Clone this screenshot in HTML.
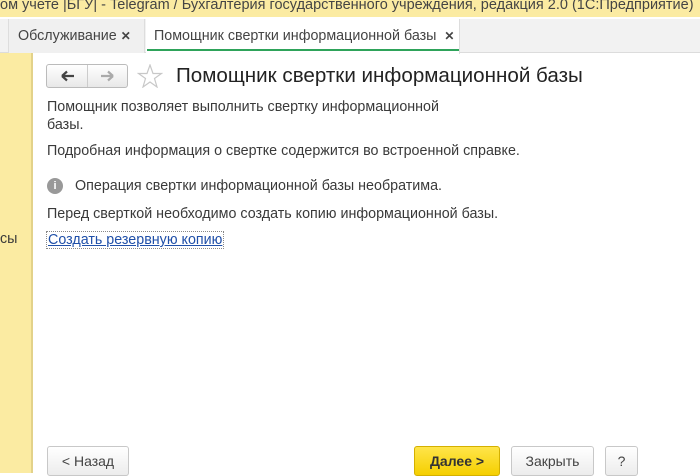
<!DOCTYPE html>
<html><head><meta charset="utf-8"><style>
body{margin:0;width:700px;height:473px;overflow:hidden;background:#fff;font-family:"Liberation Sans",sans-serif;position:relative;color:#333}
div{position:absolute;box-sizing:border-box}
.t{font-size:14.3px;white-space:nowrap;color:#3a3a3a}
.btn{border:1px solid #c8c8c8;border-radius:3px;background:linear-gradient(#fff,#ececec);font-size:14px;text-align:center;line-height:28px;color:#444}
</style></head><body>
<div style="left:0;top:0;width:700px;height:19px;background:#fbeba2;font-size:14.5px;line-height:15px;color:#444;white-space:nowrap;overflow:hidden;margin-top:-2px">ом учете |БГУ| - Telegram / Бухгалтерия государственного учреждения, редакция 2.0 (1С:Предприятие)</div>
<div style="left:0;top:19px;width:700px;height:34px;background:#f2f2f2;border-bottom:1px solid #dcdcdc"></div>
<div style="left:8px;top:19px;width:137px;height:34px;border-left:1px solid #ddd;border-right:1px solid #ddd;background:#f0f0f0;font-size:14.3px;line-height:34px;padding-left:9px;color:#444;white-space:nowrap">Обслуживание <b style="font-size:12px">✕</b></div>
<div style="left:146px;top:19px;width:314px;height:35px;background:#fff;border-right:1px solid #ddd;font-size:14.3px;line-height:34px;padding-left:8px;color:#444;white-space:nowrap">Помощник свертки информационной базы&nbsp;&nbsp;<b style="font-size:12px">✕</b></div>
<div style="left:147px;top:49px;height:2px;background:#2ea35a;width:312px"></div>
<div style="left:0;top:53px;width:33px;height:420px;background:#fbeba2;border-right:2px solid #e3d28a"></div>
<div class="t" style="left:0;top:231px">сы</div>
<div style="left:46px;top:64px;width:82px;height:24px;border:1px solid #bbb;border-radius:3px;background:linear-gradient(#fff,#e8e8e8)"></div>
<div style="left:87px;top:65px;width:1px;height:22px;background:#ccc"></div>
<svg style="position:absolute;left:59px;top:69px" width="18" height="14"><path d="M3 7H15M3 7L8 2.5M3 7L8 11.5" stroke="#444" stroke-width="2.2" fill="none"/></svg>
<svg style="position:absolute;left:98px;top:69px" width="18" height="14"><path d="M3 7H15M15 7L10 2.5M15 7L10 11.5" stroke="#aaa" stroke-width="2.2" fill="none"/></svg>
<svg style="position:absolute;left:137px;top:64px" width="26" height="24"><path d="M13 1L16 9.5H24.5L17.5 14.5L20 23L13 18L6 23L8.5 14.5L1.5 9.5H10Z" fill="none" stroke="#c8c8c8" stroke-width="1.2"/></svg>
<div style="left:176px;top:63px;font-size:20.6px;line-height:26px;color:#222;white-space:nowrap">Помощник свертки информационной базы</div>
<div class="t" style="left:47px;top:98px;line-height:18px">Помощник позволяет выполнить свертку информационной<br>базы.</div>
<div class="t" style="left:47px;top:143px">Подробная информация о свертке содержится во встроенной справке.</div>
<div style="left:47px;top:178px;width:16px;height:16px;border-radius:50%;background:#999;color:#fff;font-size:11px;line-height:16px;text-align:center;font-weight:bold">i</div>
<div class="t" style="left:75px;top:178px">Операция свертки информационной базы необратима.</div>
<div class="t" style="left:47px;top:206px">Перед сверткой необходимо создать копию информационной базы.</div>
<div class="t" style="left:46px;top:231px;color:#1f4fa8;text-decoration:underline;border:1px dotted #888;padding:0 1px">Создать резервную копию</div>
<div class="btn" style="left:47px;top:446px;width:82px;height:30px">&lt; Назад</div>
<div class="btn" style="left:414px;top:446px;width:86px;height:30px;background:linear-gradient(#ffe54a,#f5cf00);border-color:#d4b000;font-weight:bold;color:#333">Далее &gt;</div>
<div class="btn" style="left:511px;top:446px;width:83px;height:30px">Закрыть</div>
<div class="btn" style="left:605px;top:446px;width:33px;height:30px">?</div>
</body></html>
